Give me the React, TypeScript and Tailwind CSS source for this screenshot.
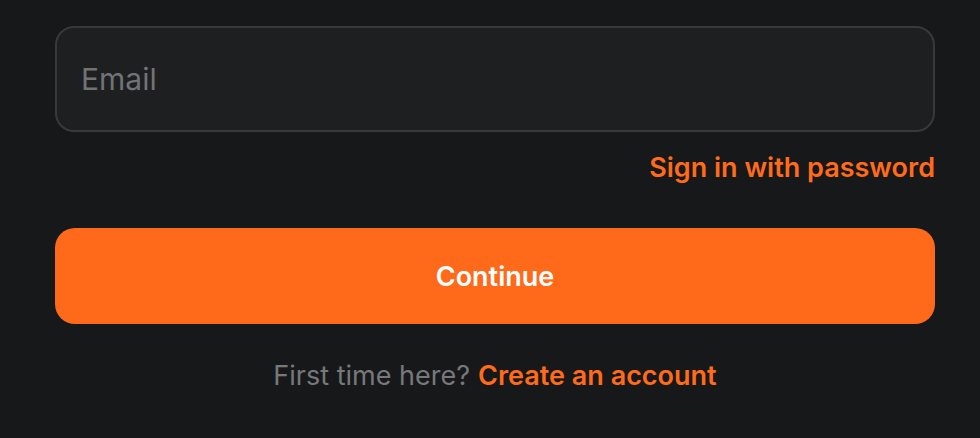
export default function App() {
  return (
    <div
      className="w-[980px] h-[438px] bg-[#17181a] pl-[55px] pr-[45px] pt-[26px] flex flex-col"
      style={{ fontFamily: "Inter, 'Noto Sans', sans-serif" }}
    >
      <div className="h-[106px] rounded-[19px] border-2 border-[#38393c] bg-[#1e1f21] flex items-center pl-[24px]">
        <span className="text-[30px] leading-none text-[#727375]">Email</span>
      </div>
      <div className="flex justify-end mt-[22px]">
        <span className="text-[27px] leading-none font-semibold text-[#ff6b1a]">Sign in with password</span>
      </div>
      <div className="mt-[47px] h-[96px] rounded-[20px] bg-[#ff6a1a] flex items-center justify-center">
        <span className="text-[27px] leading-none font-semibold text-white">Continue</span>
      </div>
      <div className="mt-[38px] flex justify-center text-[27px] leading-none">
        <span className="text-[#77787a]">First time here?</span>
        <span className="ml-[8px] font-semibold text-[#ff6b1a]">Create an account</span>
      </div>
    </div>
  );
}
